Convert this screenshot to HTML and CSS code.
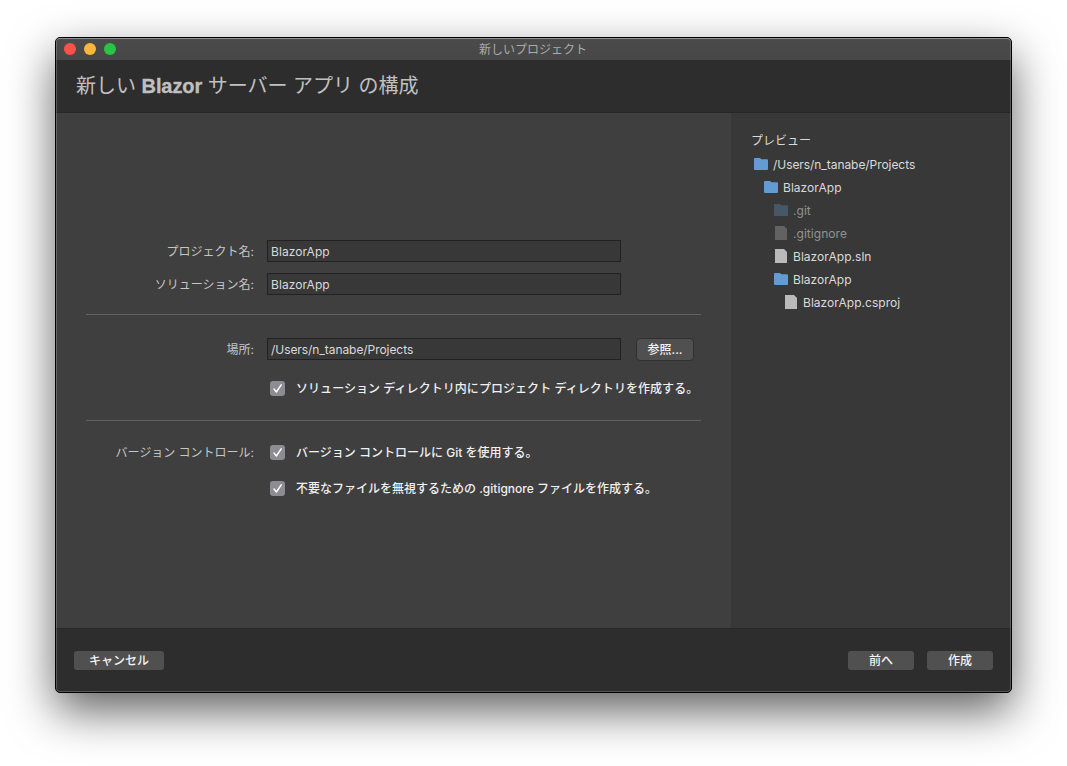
FILE: index.html
```
<!DOCTYPE html>
<html lang="ja">
<head>
<meta charset="utf-8">
<title>新しいプロジェクト</title>
<link rel="stylesheet" href="styles.css">
</head>
<body>
<svg width="0" height="0" class="defs">
  <symbol id="folder" viewBox="0 0 14 12"><path d="M0 1Q0 0 1 0H5.6Q6.2 0 6.6 .5L7.5 1.3H13Q14 1.3 14 2.3V11Q14 12 13 12H1Q0 12 0 11Z"/></symbol>
  <symbol id="file" viewBox="0 0 12 14"><path d="M0 0H9L12 3V14H0Z"/></symbol>
  <symbol id="check" viewBox="0 0 15 15"><path d="M4 8.1L6.4 11L11.2 3.9" fill="none" stroke="#fff" stroke-width="1.5" stroke-linecap="round" stroke-linejoin="round"/></symbol>
</svg>
<div class="window">
  <div class="titlebar">
    <div class="lights"><i class="close"></i><i class="minimize"></i><i class="maximize"></i></div>
    <span class="window-title">新しいプロジェクト</span>
  </div>
  <header class="header"><h1><span>新しい</span> <b>Blazor</b> <span>サーバー アプリ の構成</span></h1></header>
  <div class="body">
    <main class="form">
      <div class="row"><label class="label">プロジェクト名:</label><div class="input">BlazorApp</div></div>
      <div class="row second"><label class="label">ソリューション名:</label><div class="input">BlazorApp</div></div>
      <hr>
      <div class="row location"><label class="label">場所:</label><div class="input path">/Users/n_tanabe/Projects</div><div class="browse">参照...</div></div>
      <div class="row option dir"><span class="label"></span><svg class="checkbox"><use href="#check"/></svg><span class="text">ソリューション ディレクトリ内にプロジェクト ディレクトリを作成する。</span></div>
      <hr>
      <div class="row option git"><span class="label">バージョン コントロール:</span><svg class="checkbox"><use href="#check"/></svg><span class="text">バージョン コントロールに Git を使用する。</span></div>
      <div class="row option ignore"><span class="label"></span><svg class="checkbox"><use href="#check"/></svg><span class="text">不要なファイルを無視するための .gitignore ファイルを作成する。</span></div>
    </main>
    <aside class="preview">
      <div class="preview-title">プレビュー</div>
      <div class="node path"><svg class="folder"><use href="#folder"/></svg><span>/Users/n_tanabe/Projects</span></div>
      <div class="node l1"><svg class="folder"><use href="#folder"/></svg><span>BlazorApp</span></div>
      <div class="node l2 dim"><svg class="folder"><use href="#folder"/></svg><span>.git</span></div>
      <div class="node l2 dim"><svg class="file"><use href="#file"/></svg><span>.gitignore</span></div>
      <div class="node l2"><svg class="file"><use href="#file"/></svg><span>BlazorApp.sln</span></div>
      <div class="node l2"><svg class="folder"><use href="#folder"/></svg><span>BlazorApp</span></div>
      <div class="node l3"><svg class="file"><use href="#file"/></svg><span>BlazorApp.csproj</span></div>
    </aside>
  </div>
  <footer class="footer">
    <div class="button cancel">キャンセル</div>
    <div class="button">前へ</div>
    <div class="button">作成</div>
  </footer>
</div>
</body>
</html>
```
FILE: styles.css
```
* { box-sizing: border-box; }
body {
  margin: 0;
  height: 766px;
  padding: 37px 55px;
  overflow: hidden;
  background: #fff;
  color: #dadada;
  font: 12px/18px Inter, "Noto Sans CJK JP", sans-serif;
  white-space: nowrap;
}
.defs { position: absolute; }
.window {
  width: 957px;
  height: 656px;
  display: flex;
  flex-direction: column;
  border: 1px solid #000;
  border-radius: 5px;
  overflow: hidden;
  background: #2d2d2d;
  box-shadow: 0 18px 46px rgba(0, 0, 0, .62);
  position: relative;
}
.window::after {
  content: "";
  position: absolute;
  inset: 0;
  border: 1px solid rgba(255, 255, 255, .2);
  border-top-color: rgba(255, 255, 255, .38);
  border-radius: 4px;
}
.titlebar {
  height: 22px;
  flex: none;
  display: grid;
  grid-template-columns: 1fr auto 1fr;
  align-items: center;
  padding: 0 9px 0 8px;
  background: linear-gradient(#4b4b4b, #474747);
}
.lights { display: flex; gap: 8px; }
.lights i { width: 12px; height: 12px; border-radius: 50%; }
.close { background: #ff5049; }
.minimize { background: #fdb63c; }
.maximize { background: #2ac444; }
.window-title { padding-top: 2px; color: #ababab; }
.header {
  height: 53px;
  flex: none;
  padding: 11px 20px;
  border-bottom: 1px solid #272727;
}
h1 {
  margin: 0;
  font: 400 20px/30px "Liberation Sans", "Noto Sans CJK JP", sans-serif;
  color: #c0c0c0;
}
h1 b { letter-spacing: -.1px; -webkit-text-stroke: .3px #c0c0c0; }
.body { height: 515px; flex: none; display: flex; }
.form { width: 675px; padding: 127px 30px 0; background: #3f3f3f; }
.row { display: flex; height: 22px; align-items: center; }
.second { margin-top: 11px; }
.label { width: 168px; padding-top: 2px; margin-right: 13px; text-align: right; color: #c6c6c6; }
.input {
  width: 354px;
  height: 22px;
  padding: 2px 3px 0;
  line-height: 18px;
  border: 1px solid #222;
  background: #383838;
  letter-spacing: .06px;
}
.input.path, .node.path { letter-spacing: -.06px; }
hr { height: 1px; margin: 19px 0 0; border: 0; background: #616161; }
.location { margin-top: 23px; }
.browse {
  width: 58px;
  height: 23px;
  margin-left: 15px;
  border: 1px solid #303030;
  border-radius: 4px;
  background: #505050;
  color: #f2f2f2;
  font-weight: 500;
  line-height: 22px;
  text-align: center;
}
.option { color: #f0f0f0; font-weight: 500; }
.option .label { font-weight: 400; }
.checkbox { width: 15px; height: 15px; margin: 0 11px 0 3px; border-radius: 3px; background: #8d8c91; }
.text { padding-top: 2px; }
.dir { margin-top: 17px; }
.dir .text { letter-spacing: .05px; }
.dir + hr { margin-top: 21px; }
.git { margin-top: 20px; }
.ignore { margin-top: 14px; }
.preview { flex: 1; padding: 19px 20px 0; background: #383838; }
.preview-title { height: 21px; }
.node { height: 23px; display: flex; align-items: center; padding-left: 3px; letter-spacing: .04px; }
.l1 { padding-left: 13px; }
.l2 { padding-left: 23px; }
.l3 { padding-left: 33px; }
.folder { width: 14px; height: 12px; margin: 0 5px 1px 0; fill: #629cd3; }
.file { width: 12px; height: 14px; margin: 0 6px 1px 1px; fill: #bababa; }
.dim { color: #929292; }
.dim .folder { fill: #465767; }
.dim .file { fill: #626262; }
.footer {
  flex: 1;
  display: flex;
  gap: 13px;
  padding: 23px 18px 0;
  border-top: 1px solid #292929;
}
.button {
  width: 66px;
  height: 19px;
  margin-top: -1px;
  border-radius: 3px;
  background: #505050;
  color: #f3f3f3;
  font-weight: 500;
  line-height: 20px;
  text-align: center;
}
.cancel { width: 90px; margin-right: auto; }
```
